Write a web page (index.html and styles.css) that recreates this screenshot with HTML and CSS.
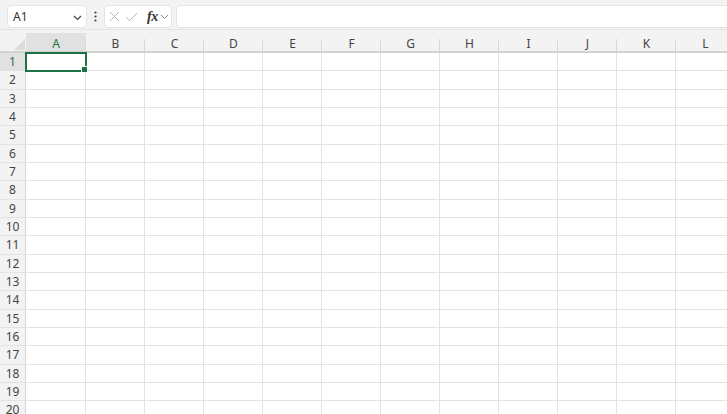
FILE: index.html
```html
<!DOCTYPE html>
<html>
<head>
<meta charset="utf-8">
<link rel="stylesheet" href="styles.css">
</head>
<body>
<div class="app">
  <div class="toolbar">
    <div class="namebox">
      <span class="ref">A1</span>
      <svg class="chev" width="9" height="6" viewBox="0 0 9 6"><path d="M1 1 L4.5 4.5 L8 1" fill="none" stroke="#444" stroke-width="1.2"/></svg>
    </div>
    <div class="dots">
      <svg width="3" height="11" viewBox="0 0 3 11"><circle cx="1.5" cy="1.5" r="1.1" fill="#444"/><circle cx="1.5" cy="5.5" r="1.1" fill="#444"/><circle cx="1.5" cy="9.5" r="1.1" fill="#444"/></svg>
    </div>
    <div class="fxbox">
      <svg class="ico" width="11" height="11" viewBox="0 0 11 11"><path d="M1 1 L10 10 M10 1 L1 10" stroke="#b8b8b8" stroke-width="1"/></svg>
      <svg class="ico" width="13" height="10" viewBox="0 0 13 10"><path d="M1 5 L4.5 8.5 L12 1" fill="none" stroke="#b8b8b8" stroke-width="1"/></svg>
      <span class="fx">fx</span>
      <svg class="chev2" width="9" height="6" viewBox="0 0 9 6"><path d="M1 1 L4.5 4.5 L8 1" fill="none" stroke="#888" stroke-width="1"/></svg>
    </div>
    <div class="formula"></div>
  </div>

  <div class="colheads">
    <div class="corner"><span class="tri"></span></div>
    <div class="ch sel">A</div><div class="ch">B</div><div class="ch">C</div><div class="ch">D</div><div class="ch">E</div><div class="ch">F</div><div class="ch">G</div><div class="ch">H</div><div class="ch">I</div><div class="ch">J</div><div class="ch">K</div><div class="ch">L</div>
  </div>

  <div class="sheet">
    <div class="row"><div class="rh sel">1</div><div class="c active"><span class="handle"></span></div><div class="c"></div><div class="c"></div><div class="c"></div><div class="c"></div><div class="c"></div><div class="c"></div><div class="c"></div><div class="c"></div><div class="c"></div><div class="c"></div><div class="c"></div></div>
    <div class="row"><div class="rh">2</div><div class="c"></div><div class="c"></div><div class="c"></div><div class="c"></div><div class="c"></div><div class="c"></div><div class="c"></div><div class="c"></div><div class="c"></div><div class="c"></div><div class="c"></div><div class="c"></div></div>
    <div class="row"><div class="rh">3</div><div class="c"></div><div class="c"></div><div class="c"></div><div class="c"></div><div class="c"></div><div class="c"></div><div class="c"></div><div class="c"></div><div class="c"></div><div class="c"></div><div class="c"></div><div class="c"></div></div>
    <div class="row"><div class="rh">4</div><div class="c"></div><div class="c"></div><div class="c"></div><div class="c"></div><div class="c"></div><div class="c"></div><div class="c"></div><div class="c"></div><div class="c"></div><div class="c"></div><div class="c"></div><div class="c"></div></div>
    <div class="row"><div class="rh">5</div><div class="c"></div><div class="c"></div><div class="c"></div><div class="c"></div><div class="c"></div><div class="c"></div><div class="c"></div><div class="c"></div><div class="c"></div><div class="c"></div><div class="c"></div><div class="c"></div></div>
    <div class="row"><div class="rh">6</div><div class="c"></div><div class="c"></div><div class="c"></div><div class="c"></div><div class="c"></div><div class="c"></div><div class="c"></div><div class="c"></div><div class="c"></div><div class="c"></div><div class="c"></div><div class="c"></div></div>
    <div class="row"><div class="rh">7</div><div class="c"></div><div class="c"></div><div class="c"></div><div class="c"></div><div class="c"></div><div class="c"></div><div class="c"></div><div class="c"></div><div class="c"></div><div class="c"></div><div class="c"></div><div class="c"></div></div>
    <div class="row"><div class="rh">8</div><div class="c"></div><div class="c"></div><div class="c"></div><div class="c"></div><div class="c"></div><div class="c"></div><div class="c"></div><div class="c"></div><div class="c"></div><div class="c"></div><div class="c"></div><div class="c"></div></div>
    <div class="row"><div class="rh">9</div><div class="c"></div><div class="c"></div><div class="c"></div><div class="c"></div><div class="c"></div><div class="c"></div><div class="c"></div><div class="c"></div><div class="c"></div><div class="c"></div><div class="c"></div><div class="c"></div></div>
    <div class="row"><div class="rh">10</div><div class="c"></div><div class="c"></div><div class="c"></div><div class="c"></div><div class="c"></div><div class="c"></div><div class="c"></div><div class="c"></div><div class="c"></div><div class="c"></div><div class="c"></div><div class="c"></div></div>
    <div class="row"><div class="rh">11</div><div class="c"></div><div class="c"></div><div class="c"></div><div class="c"></div><div class="c"></div><div class="c"></div><div class="c"></div><div class="c"></div><div class="c"></div><div class="c"></div><div class="c"></div><div class="c"></div></div>
    <div class="row"><div class="rh">12</div><div class="c"></div><div class="c"></div><div class="c"></div><div class="c"></div><div class="c"></div><div class="c"></div><div class="c"></div><div class="c"></div><div class="c"></div><div class="c"></div><div class="c"></div><div class="c"></div></div>
    <div class="row"><div class="rh">13</div><div class="c"></div><div class="c"></div><div class="c"></div><div class="c"></div><div class="c"></div><div class="c"></div><div class="c"></div><div class="c"></div><div class="c"></div><div class="c"></div><div class="c"></div><div class="c"></div></div>
    <div class="row"><div class="rh">14</div><div class="c"></div><div class="c"></div><div class="c"></div><div class="c"></div><div class="c"></div><div class="c"></div><div class="c"></div><div class="c"></div><div class="c"></div><div class="c"></div><div class="c"></div><div class="c"></div></div>
    <div class="row"><div class="rh">15</div><div class="c"></div><div class="c"></div><div class="c"></div><div class="c"></div><div class="c"></div><div class="c"></div><div class="c"></div><div class="c"></div><div class="c"></div><div class="c"></div><div class="c"></div><div class="c"></div></div>
    <div class="row"><div class="rh">16</div><div class="c"></div><div class="c"></div><div class="c"></div><div class="c"></div><div class="c"></div><div class="c"></div><div class="c"></div><div class="c"></div><div class="c"></div><div class="c"></div><div class="c"></div><div class="c"></div></div>
    <div class="row"><div class="rh">17</div><div class="c"></div><div class="c"></div><div class="c"></div><div class="c"></div><div class="c"></div><div class="c"></div><div class="c"></div><div class="c"></div><div class="c"></div><div class="c"></div><div class="c"></div><div class="c"></div></div>
    <div class="row"><div class="rh">18</div><div class="c"></div><div class="c"></div><div class="c"></div><div class="c"></div><div class="c"></div><div class="c"></div><div class="c"></div><div class="c"></div><div class="c"></div><div class="c"></div><div class="c"></div><div class="c"></div></div>
    <div class="row"><div class="rh">19</div><div class="c"></div><div class="c"></div><div class="c"></div><div class="c"></div><div class="c"></div><div class="c"></div><div class="c"></div><div class="c"></div><div class="c"></div><div class="c"></div><div class="c"></div><div class="c"></div></div>
    <div class="row"><div class="rh">20</div><div class="c"></div><div class="c"></div><div class="c"></div><div class="c"></div><div class="c"></div><div class="c"></div><div class="c"></div><div class="c"></div><div class="c"></div><div class="c"></div><div class="c"></div><div class="c"></div></div>
  </div>
</div>
</body>
</html>
```

FILE: styles.css
```css
html, body {
  margin: 0;
  padding: 0;
  background: #f3f3f3;
  font-family: "Noto Sans", "Open Sans", sans-serif;
  overflow: hidden;
}
.app {
  width: 727px;
  height: 414px;
  overflow: hidden;
}
.toolbar {
  display: flex;
  align-items: flex-start;
  height: 24px;
  padding: 5px 0 0 7px;
  border-bottom: 1px solid #e2e2e2;
  box-sizing: content-box;
}
.namebox {
  width: 80px;
  height: 23px;
  box-sizing: border-box;
  background: #fff;
  border: 1px solid #e4e4e4;
  border-radius: 4px;
  display: flex;
  align-items: center;
  justify-content: space-between;
  padding: 0 4px 0 5px;
}
.ref {
  font-size: 12px;
  color: #333;
  line-height: 1;
}
.chev { margin-top: 2px; }
.dots {
  width: 17px;
  height: 23px;
  display: flex;
  align-items: center;
  justify-content: center;
}
.fxbox {
  width: 68px;
  height: 23px;
  box-sizing: border-box;
  background: #fff;
  border: 1px solid #e4e4e4;
  border-radius: 4px;
  display: flex;
  align-items: center;
  padding: 0 0 0 4px;
  gap: 5px;
}
.ico { flex: none; }
.fx {
  font-family: "Liberation Serif", "DejaVu Serif", serif;
  font-style: italic;
  font-weight: bold;
  font-size: 14px;
  color: #333;
  line-height: 1;
  margin-left: 4px;
  letter-spacing: -0.5px;
}
.chev2 { margin-left: -3px; margin-top: 1px; }
.formula {
  flex: 1;
  height: 23px;
  margin-left: 4px;
  margin-right: -10px;
  background: #fff;
  border: 1px solid #e4e4e4;
  border-radius: 4px;
  box-sizing: border-box;
}

.colheads, .row {
  display: grid;
  grid-template-columns: 26px 60px repeat(11, 59px);
}
.colheads {
  padding-top: 3px;
  height: 18px;
  border-bottom: 2px solid #d2d2d2;
  background: #f3f3f3;
}
.corner {
  display: flex;
  align-items: flex-end;
  justify-content: flex-end;
  padding: 0 1px 1px 0;
}
.tri {
  width: 0;
  height: 0;
  border-left: 11px solid transparent;
  border-bottom: 11px solid #dcdcdc;
}
.ch {
  font-size: 12px;
  color: #444;
  text-align: center;
  box-sizing: border-box;
  height: 18px;
  padding-top: 3px;
  line-height: 15px;
  background: linear-gradient(#d9d9d9, #d9d9d9) right bottom / 1px 12px no-repeat;
}
.ch.sel {
  background-color: #e1e1e1;
  color: #1e7145;
}

.sheet { background: #fff; }
.row {
  height: 18.33px;
  box-sizing: border-box;
}
.rh {
  font-size: 12px;
  color: #444;
  text-align: center;
  line-height: 18.5px;
  background: #f3f3f3;
  border-right: 1px solid #d6d6d6;
  border-bottom: 1px solid #e3e3e3;
  box-sizing: border-box;
  overflow: hidden;
}
.rh.sel {
  background: #e1e1e1;
  color: #1e7145;
}
.c {
  border-right: 1px solid #e3e3e3;
  border-bottom: 1px solid #e3e3e3;
  background: #fff;
}
.c.active {
  position: relative;
  outline: 2px solid #1e7145;
  outline-offset: -1px;
  z-index: 1;
}
.handle {
  position: absolute;
  right: -3px;
  bottom: -3px;
  width: 5px;
  height: 5px;
  background: #1e7145;
  border: 1px solid #fff;
  box-sizing: content-box;
}
```
